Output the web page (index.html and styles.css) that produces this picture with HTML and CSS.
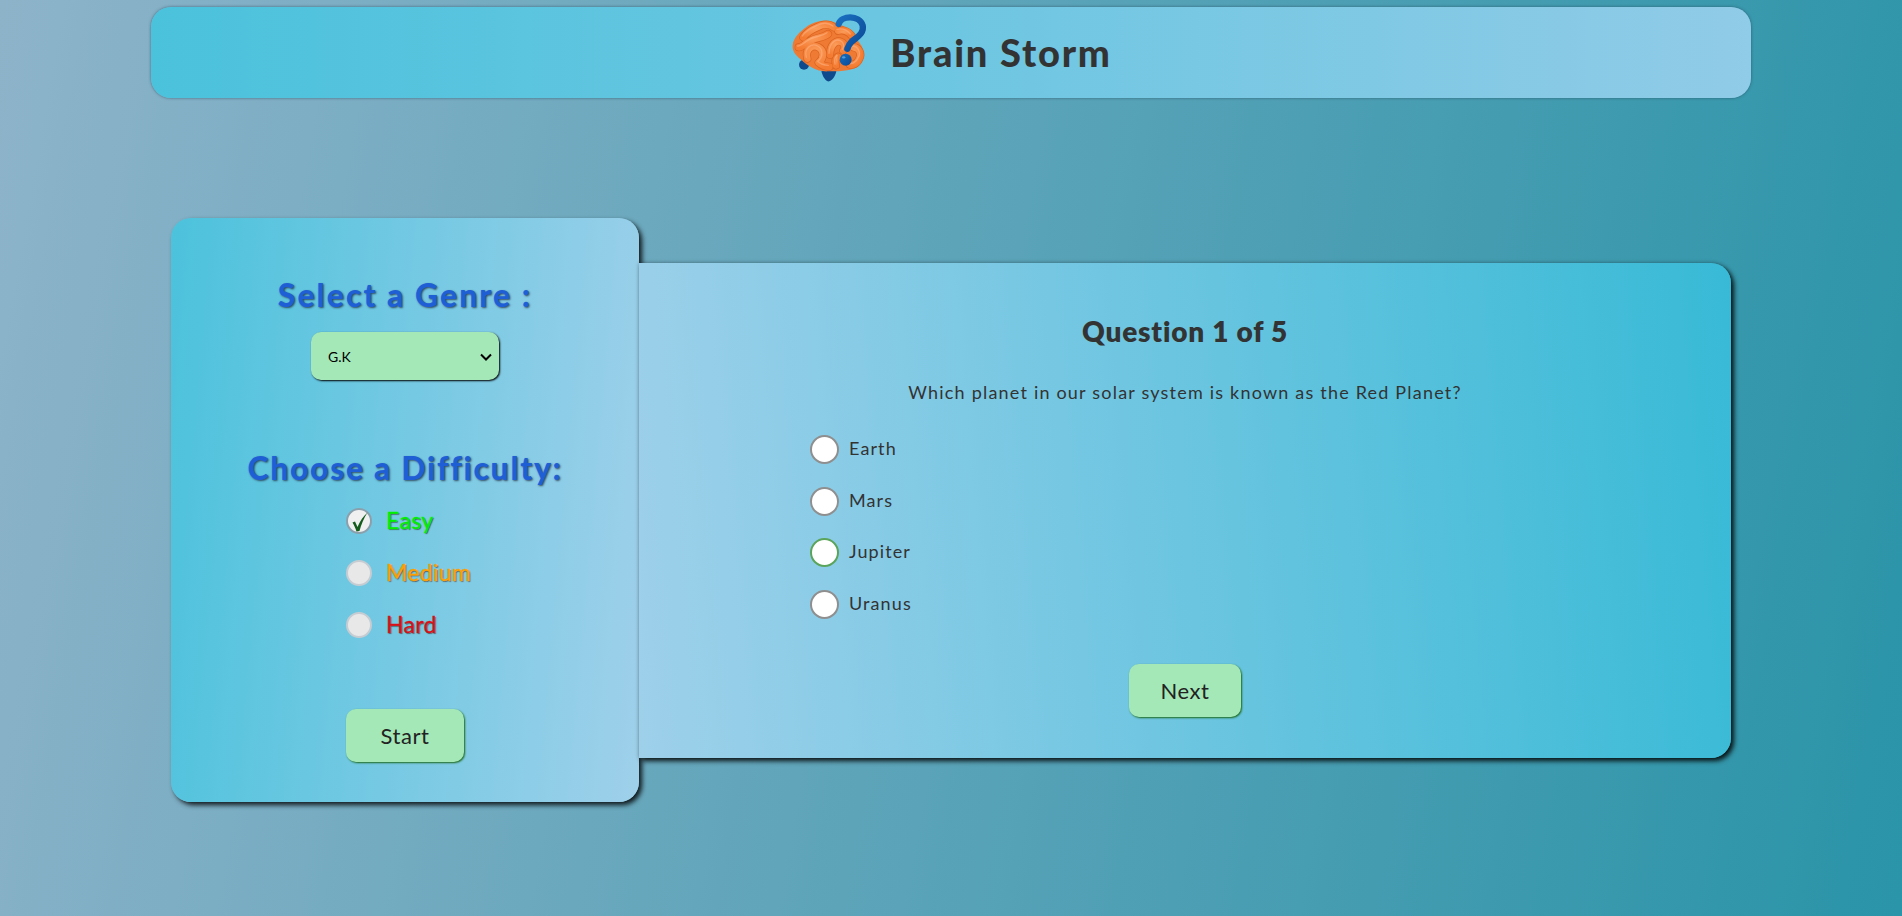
FILE: index.html
```html
<!DOCTYPE html>
<html lang="en">
<head>
<meta charset="utf-8">
<title>Brain Storm</title>
<link rel="stylesheet" href="styles.css">
</head>
<body>
<header class="site-header">
  <svg class="logo" viewBox="0 0 270 234" width="90" height="78" aria-hidden="true">
    <defs>
      <radialGradient id="orange" cx="40%" cy="30%" r="80%">
        <stop offset="0" stop-color="#fb9d5c"/>
        <stop offset="1" stop-color="#f47c32"/>
      </radialGradient>
      <linearGradient id="blue" x1="0" y1="0" x2="1" y2="1">
        <stop offset="0" stop-color="#1a6fc0"/>
        <stop offset="1" stop-color="#0b4a96"/>
      </linearGradient>
      <g id="gyri" fill="none" stroke-linecap="round" stroke-linejoin="round">
        <path d="M58 88 C72 66 96 60 112 52 C126 48 140 50 150 58"/>
        <path d="M44 118 C56 118 66 104 84 96 C100 88 116 90 132 78"/>
        <path d="M70 152 C62 124 86 108 104 118 C122 128 120 152 104 164 C114 174 126 176 136 176"/>
        <path d="M138 140 C138 112 156 94 172 102 C184 108 184 120 178 128"/>
        <path d="M162 68 C178 64 192 70 202 82"/>
        <path d="M208 118 C226 118 234 138 226 152 C220 168 206 172 198 170"/>
        <path d="M156 172 C152 158 156 150 162 146"/>
      </g>
    </defs>
    <circle class="logo-foot" cx="60" cy="170" r="15"/>
    <path class="logo-foot" d="M112 190 C118 212 128 222 136 220 C148 216 156 200 158 184z"/>
    <path d="M26 112 C28 88 50 70 66 58 C90 38 130 32 158 46 C190 54 214 84 226 104 C244 124 244 158 222 176 C196 190 160 190 132 190 C100 192 72 176 50 154 C34 142 24 128 26 112z" fill="#ee7a34"/>
    <use href="#gyri" stroke="#d9621f" stroke-width="24"/>
    <use href="#gyri" stroke="url(#orange)" stroke-width="20"/>
    <use href="#gyri" stroke="#ffb98f" stroke-width="4" opacity=".5" transform="translate(-3 -4)"/>
    <path d="M164 48 C172 22 226 20 236 52 C242 78 214 90 202 102 C194 110 192 116 190 122" fill="none" stroke="url(#blue)" stroke-width="19" stroke-linecap="round"/>
    <circle cx="185" cy="155" r="18" fill="url(#blue)"/>
    <ellipse cx="179" cy="148" rx="5" ry="3.500" fill="#4f9fe0"/>
  </svg>
  <h1 class="site-title">Brain Storm</h1>
</header>

<main class="quiz-layout">
  <aside class="settings-panel">
    <h2 class="settings-heading genre-heading">Select a Genre :</h2>
    <div class="select-wrap">
      <select class="genre-select">
        <option>G.K</option>
        <option>Science</option>
        <option>History</option>
      </select>
      <svg class="select-chevron" viewBox="0 0 12 8" width="12" height="8" aria-hidden="true"><path d="M1 1.500 L6 6.500 L11 1.500" fill="none" stroke="#000" stroke-width="2"/></svg>
    </div>
    <h2 class="settings-heading difficulty-heading">Choose a Difficulty:</h2>
    <div class="difficulty-list">
      <label class="difficulty-item easy">
        <input class="difficulty-radio" type="radio" name="difficulty" checked>
        <svg class="check-mark" viewBox="0 0 26 26" width="26" height="26" aria-hidden="true"><path d="M6.500 14.500 L9 13.500 L11.500 19 C14 13 17.500 8 21.500 4.500 C18 10 15 17 13.500 23 L10.500 23.500 C9.500 20 8 17 6.500 14.500z" fill="#135c1c"/></svg>
        <span class="difficulty-label">Easy</span>
      </label>
      <label class="difficulty-item medium">
        <input class="difficulty-radio" type="radio" name="difficulty">
        <span class="difficulty-label">Medium</span>
      </label>
      <label class="difficulty-item hard">
        <input class="difficulty-radio" type="radio" name="difficulty">
        <span class="difficulty-label">Hard</span>
      </label>
    </div>
    <button class="action-button start-button" type="button">Start</button>
  </aside>

  <section class="question-panel">
    <h2 class="question-count">Question 1 of 5</h2>
    <p class="question-text">Which planet in our solar system is known as the Red Planet?</p>
    <div class="answer-list">
      <label class="answer-item"><input class="answer-radio" type="radio" name="answer"><span class="answer-label">Earth</span></label>
      <label class="answer-item"><input class="answer-radio" type="radio" name="answer"><span class="answer-label">Mars</span></label>
      <label class="answer-item hovered"><input class="answer-radio" type="radio" name="answer"><span class="answer-label">Jupiter</span></label>
      <label class="answer-item"><input class="answer-radio" type="radio" name="answer"><span class="answer-label">Uranus</span></label>
    </div>
    <button class="action-button next-button" type="button">Next</button>
  </section>
</main>
</body>
</html>
```
FILE: styles.css
```css
* { box-sizing: border-box; }

html, body { height: 100%; }

body {
  margin: 0;
  overflow: hidden;
  padding-top: 7px;
  background: linear-gradient(100deg, #8db3c9 0%, #2a94a8 100%);
  font-family: "Lato", "Noto Sans", sans-serif;
  color: #333;
}

.site-header {
  width: 1600px;
  height: 91px;
  margin: 0 auto;
  display: flex;
  align-items: center;
  justify-content: center;
  gap: 16px;
  border-radius: 20px;
  background: linear-gradient(90deg, #4bc2dc, #90cbe7);
  box-shadow: 0 0 3px rgba(40, 70, 90, 0.7);
}

.logo {
  flex: none;
  margin-bottom: 11px;
}

.logo-foot { fill: #0f4a8c; }

.site-title {
  margin: 0 6px 2px 0;
  font-size: 38px;
  font-weight: 900;
  letter-spacing: 1.800px;
  color: #333;
}

.quiz-layout {
  width: 1560px;
  height: 584px;
  margin: 120px auto 0;
  display: flex;
  align-items: center;
}

.settings-panel {
  width: 468px;
  height: 584px;
  flex: none;
  display: flex;
  flex-direction: column;
  align-items: center;
  padding-top: 57px;
  border-radius: 20px;
  background: linear-gradient(95deg, #4cc2dc, #9fd0ea);
  box-shadow: 3px 3px 5px rgba(0, 0, 0, 0.85);
}

.settings-heading {
  margin: 0;
  font-size: 32px;
  line-height: 40px;
  font-weight: 900;
  color: #1f5fd6;
  text-shadow: 1px 1px 2px rgba(30, 40, 60, 0.75);
}

.genre-heading { letter-spacing: 2px; }

.select-wrap {
  position: relative;
  margin-top: 17px;
  display: flex;
}

.genre-select {
  appearance: none;
  width: 188px;
  height: 48px;
  padding-left: 17px;
  border: 0;
  border-radius: 10px;
  background-color: #a4e8b8;
  box-shadow: 1px 1px 2px #000;
  font-family: inherit;
  font-size: 14px;
  color: #000;
}

.select-chevron {
  position: absolute;
  right: 7px;
  top: 21px;
  pointer-events: none;
}

.difficulty-heading {
  margin-top: 68px;
  letter-spacing: 1.650px;
}

.difficulty-list {
  margin-top: 20px;
  display: flex;
  flex-direction: column;
  gap: 26px;
  width: 122px;
  margin-left: 4px;
}

.difficulty-item {
  position: relative;
  display: flex;
  align-items: center;
  gap: 14px;
  height: 26px;
  font-size: 23px;
  font-weight: 400;
  letter-spacing: 0.3px;
  -webkit-text-stroke: 0.3px currentColor;
  text-shadow: 1px 1px 1px rgba(60, 60, 60, 0.7);
}

.difficulty-label { padding-bottom: 2px; }

.easy { color: #00f000; }
.medium { color: #ffa000; }
.hard { color: #d81018; }

.difficulty-radio {
  appearance: none;
  width: 26px;
  height: 26px;
  margin: 0;
  flex: none;
  border-radius: 50%;
  border: 2px solid #c6ccd2;
  background: #e8e8e8;
}

.difficulty-radio:checked { border-color: #8aa0ac; background: #f0f0f0; }

.check-mark {
  position: absolute;
  left: 0;
  top: 0;
}

.action-button {
  border: 0;
  border-radius: 10px;
  background: #a4e8b8;
  box-shadow: 1px 1px 2px #1c6a1c;
  font-family: inherit;
  font-size: 22px;
  letter-spacing: 0.6px;
  color: #222;
}

.start-button {
  width: 118px;
  height: 53px;
  margin-top: 71px;
}

.question-panel {
  flex: 1;
  height: 495px;
  display: flex;
  flex-direction: column;
  align-items: center;
  padding-top: 49px;
  border-radius: 0 20px 20px 0;
  background: linear-gradient(85deg, #9ed0ea, #38bad6);
  box-shadow: 3px 3px 5px rgba(0, 0, 0, 0.85), 0 0 4px rgba(0, 0, 0, 0.25);
}

.question-count {
  margin: 0;
  font-size: 28px;
  line-height: 38px;
  font-weight: 800;
  color: #333;
  letter-spacing: 0.8px;
}

.question-text {
  margin: 30.500px 0 0;
  font-size: 18px;
  line-height: 24px;
  letter-spacing: 1.200px;
  color: #333;
}

.answer-list {
  align-self: flex-start;
  margin: 31px 0 0 171px;
  display: flex;
  flex-direction: column;
  gap: 22px;
}

.answer-item {
  display: flex;
  align-items: center;
  gap: 10px;
  height: 29.500px;
  font-size: 18px;
  letter-spacing: 1.100px;
  color: #333;
}

.answer-label { padding-bottom: 3px; }

.answer-radio {
  appearance: none;
  width: 29px;
  height: 29px;
  margin: 0;
  flex: none;
  border-radius: 50%;
  border: 2px solid #8f8f8f;
  background: #fff;
}

.hovered .answer-radio { border-color: #5ba45b; }

.next-button {
  width: 112px;
  height: 53px;
  margin-top: 44.500px;
}
```
